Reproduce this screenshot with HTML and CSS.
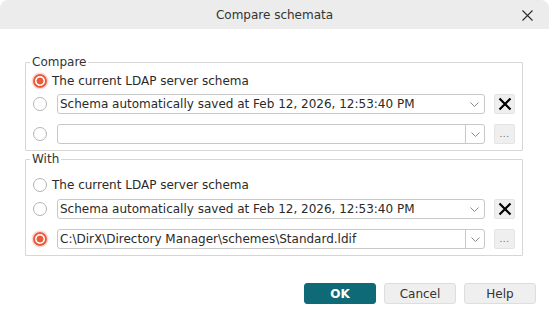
FILE: index.html
```html
<!DOCTYPE html>
<html>
<head>
<meta charset="utf-8">
<link rel="stylesheet" href="styles.css">
</head>
<body>
<div class="window">
  <div class="titlebar">
    <span></span>
    <span class="title">Compare schemata</span>
    <span class="close"><svg width="11" height="11" viewBox="0 0 11 11"><path d="M0.5 0.5 L10.5 10.5 M10.5 0.5 L0.5 10.5" stroke="#2b2b2b" stroke-width="1.1" fill="none"/></svg></span>
  </div>
  <div class="content">
    <fieldset class="group group-compare">
      <legend>Compare</legend>
      <div class="opt opt-plain"><span class="radio checked"></span><span class="label">The current LDAP server schema</span></div>
      <div class="opt opt-combo">
        <span class="radio"></span>
        <div class="combo"><span class="combo-text">Schema automatically saved at Feb 12, 2026, 12:53:40 PM</span><span class="chev"><svg width="9" height="5" viewBox="0 0 9 5"><path d="M0.5 0.5 L4.5 4.5 L8.5 0.5" stroke="#8a8a8a" stroke-width="1" fill="none"/></svg></span></div>
        <span class="tool"><svg width="14" height="14" viewBox="0 0 14 14"><path d="M1.5 1.5 L12.5 12.5 M12.5 1.5 L1.5 12.5" stroke="#000" stroke-width="2.2" fill="none"/></svg></span>
      </div>
      <div class="opt opt-combo">
        <span class="radio"></span>
        <div class="combo combo-edit"><span class="combo-text"></span><span class="chev chev-sep"><svg width="9" height="5" viewBox="0 0 9 5"><path d="M0.5 0.5 L4.5 4.5 L8.5 0.5" stroke="#8a8a8a" stroke-width="1" fill="none"/></svg></span></div>
        <span class="tool tool-dots">...</span>
      </div>
    </fieldset>
    <fieldset class="group group-with">
      <legend>With</legend>
      <div class="opt opt-plain"><span class="radio"></span><span class="label">The current LDAP server schema</span></div>
      <div class="opt opt-combo">
        <span class="radio"></span>
        <div class="combo"><span class="combo-text">Schema automatically saved at Feb 12, 2026, 12:53:40 PM</span><span class="chev"><svg width="9" height="5" viewBox="0 0 9 5"><path d="M0.5 0.5 L4.5 4.5 L8.5 0.5" stroke="#8a8a8a" stroke-width="1" fill="none"/></svg></span></div>
        <span class="tool"><svg width="14" height="14" viewBox="0 0 14 14"><path d="M1.5 1.5 L12.5 12.5 M12.5 1.5 L1.5 12.5" stroke="#000" stroke-width="2.2" fill="none"/></svg></span>
      </div>
      <div class="opt opt-combo">
        <span class="radio checked"></span>
        <div class="combo combo-edit"><span class="combo-text">C:\DirX\Directory Manager\schemes\Standard.ldif</span><span class="chev chev-sep"><svg width="9" height="5" viewBox="0 0 9 5"><path d="M0.5 0.5 L4.5 4.5 L8.5 0.5" stroke="#8a8a8a" stroke-width="1" fill="none"/></svg></span></div>
        <span class="tool tool-dots">...</span>
      </div>
    </fieldset>
  </div>
  <div class="footer">
    <span class="btn btn-primary">OK</span>
    <span class="btn">Cancel</span>
    <span class="btn">Help</span>
  </div>
</div>
</body>
</html>
```
FILE: styles.css
```css
html, body {
  margin: 0;
  padding: 0;
  background: #ffffff;
}
body {
  font-family: "DejaVu Sans", sans-serif;
  font-size: 12px;
  color: #222;
}
.window {
  width: 549px;
  height: 317px;
  display: flex;
  flex-direction: column;
  background: #fff;
  border-radius: 8px;
  overflow: hidden;
  box-sizing: border-box;
}
.titlebar {
  height: 29px;
  flex: none;
  background: #ececec;
  display: grid;
  grid-template-columns: 1fr auto 1fr;
  align-items: center;
}
.title {
  color: #333;
  font-size: 12px;
  line-height: 14px;
  padding-top: 1px;
}
.close {
  justify-self: end;
  margin-right: 16px;
  display: flex;
  padding-top: 1px;
}
.content {
  padding: 26px 26px 0 25px;
  display: flex;
  flex-direction: column;
}
.group {
  margin: 0;
  border: 1px solid #d6d6d6;
  border-radius: 1px;
  padding: 2px 7px 6px 4px;
  display: flex;
  flex-direction: column;
  min-width: 0;
}
.group legend {
  padding: 0 2px;
  line-height: 14px;
  font-size: 12px;
  color: #333;
}
.group-with {
  margin-top: 1px;
  padding-top: 9px;
}
.opt {
  display: flex;
  align-items: center;
  height: 20px;
}
.opt-plain + .opt-combo {
  margin-top: 3px;
}
.group-with .opt-plain + .opt-combo {
  margin-top: 4px;
}
.opt-combo + .opt-combo {
  margin-top: 10px;
}
.radio {
  flex: none;
  width: 14px;
  height: 14px;
  box-sizing: border-box;
  border-radius: 50%;
  border: 1px solid #b4b4b4;
  background: #fff;
  margin-left: 3px;
}
.radio.checked {
  border: 2px solid #ea5a3b;
  background: radial-gradient(circle, #ea5a3b 0 3.2px, #fff 3.8px);
  box-shadow: 0 0 0 1.5px rgba(234, 90, 59, 0.22);
}
.label {
  margin-left: 5px;
  color: #2a2a2a;
  white-space: nowrap;
}
.combo {
  flex: 1;
  margin-left: 10px;
  height: 20px;
  box-sizing: border-box;
  border: 1px solid #c8c8c8;
  border-radius: 3px;
  display: flex;
  align-items: center;
  background: #fff;
  min-width: 0;
}
.combo-text {
  flex: 1;
  padding-left: 2px;
  white-space: nowrap;
  overflow: hidden;
  color: #2a2a2a;
}
.chev {
  flex: none;
  width: 18px;
  height: 100%;
  display: flex;
  align-items: center;
  justify-content: center;
  margin-right: 1px;
}
.chev-sep {
  width: 18px;
  margin-right: 0;
  border-left: 1px solid #c8c8c8;
}
.tool {
  flex: none;
  width: 21px;
  height: 20px;
  box-sizing: border-box;
  margin-left: 9px;
  background: #efefef;
  border: 1px solid #e4e4e4;
  border-radius: 2px;
  display: flex;
  align-items: center;
  justify-content: center;
}
.tool-dots {
  font-size: 9px;
  color: #666;
  align-items: flex-end;
  padding-bottom: 4px;
  line-height: 9px;
  letter-spacing: 0.5px;
}
.footer {
  margin-top: auto;
  display: flex;
  justify-content: flex-end;
  gap: 8px;
  padding: 0 13px 13px 0;
}
.btn {
  width: 72px;
  height: 21px;
  box-sizing: border-box;
  border: 1px solid #dedede;
  background: #efefef;
  border-radius: 3px;
  display: flex;
  align-items: center;
  justify-content: center;
  color: #333;
  font-size: 12px;
}
.btn-primary {
  background: #0f6a78;
  border-color: #0f6a78;
  color: #fff;
  font-weight: bold;
}
```
